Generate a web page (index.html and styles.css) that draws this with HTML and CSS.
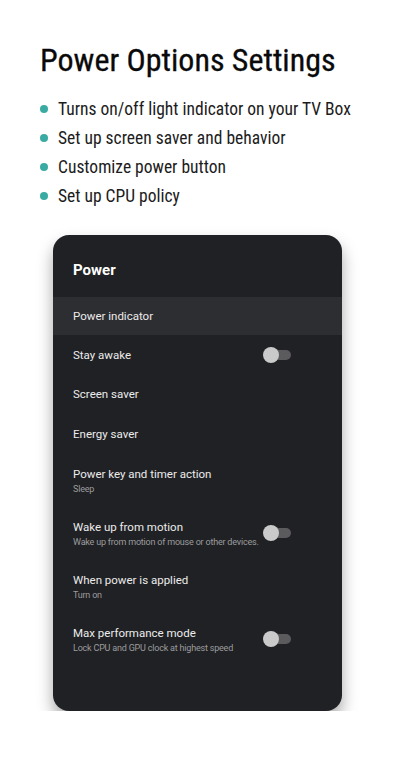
FILE: index.html
```html
<!DOCTYPE html>
<html lang="en">
  <head>
    <meta charset="UTF-8" />
    <meta name="viewport" content="width=device-width, initial-scale=1.0" />
    <title>Power Options Settings</title>
    <link rel="stylesheet" href="styles.css">
  </head>
  <body>
    <header class="intro">
      <h1>Power Options Settings</h1>
      <ul class="features">
        <li>Turns on/off light indicator on your TV Box</li>
        <li>Set up screen saver and behavior</li>
        <li>Customize power button</li>
        <li>Set up CPU policy</li>
      </ul>
    </header>

    <main class="panel">
      <div class="panel-title">Power</div>

      <div class="row selected">
        <div class="label"><span class="name">Power indicator</span></div>
      </div>
      <div class="row">
        <div class="label"><span class="name">Stay awake</span></div>
        <span class="switch"></span>
      </div>
      <div class="row">
        <div class="label"><span class="name">Screen saver</span></div>
      </div>
      <div class="row">
        <div class="label"><span class="name">Energy saver</span></div>
      </div>
      <div class="row tall">
        <div class="label">
          <span class="name">Power key and timer action</span>
          <span class="sub">Sleep</span>
        </div>
      </div>
      <div class="row tall">
        <div class="label">
          <span class="name">Wake up from motion</span>
          <span class="sub">Wake up from motion of mouse or other devices.</span>
        </div>
        <span class="switch"></span>
      </div>
      <div class="row tall">
        <div class="label">
          <span class="name">When power is applied</span>
          <span class="sub">Turn on</span>
        </div>
      </div>
      <div class="row tall">
        <div class="label">
          <span class="name">Max performance mode</span>
          <span class="sub">Lock CPU and GPU clock at highest speed</span>
        </div>
        <span class="switch"></span>
      </div>
    </main>
  </body>
</html>
```

FILE: styles.css
```css
:root {
  --ink: #0a0a0a;
  --teal: #3aaba3;
  --panel: #202124;
  --panel-hi: #2d2e31;
  --text-hi: #ececec;
  --text-lo: #9c9c9e;
  --font: Roboto, "Liberation Sans", Arial, sans-serif;
}

* {
  box-sizing: border-box;
}

html,
body {
  margin: 0;
  background: #fff;
  font-family: var(--font);
}

.intro {
  padding: 40px 0 0 40px;
}

h1 {
  margin: 0;
  font-size: 32px;
  font-weight: 400;
  font-stretch: condensed;
  line-height: 40px;
  color: var(--ink);
  -webkit-text-stroke: 0.3px var(--ink);
}

.features {
  list-style: none;
  margin: 14px 0 0;
  padding: 0;
}

.features li {
  display: flex;
  align-items: center;
  gap: 10px;
  height: 29px;
  font-size: 17.5px;
  font-stretch: condensed;
  color: #1c1c1c;
}

/* teal dot bullets */
.features li::before {
  content: "";
  width: 8px;
  height: 8px;
  border-radius: 50%;
  background: var(--teal);
}

.panel {
  width: 289px;
  height: 476px;
  margin: 25px 0 0 53px;
  background: var(--panel);
  border-radius: 16px;
  overflow: hidden;
  box-shadow: 0 9px 16px rgba(0, 0, 0, 0.35);
}

.panel-title {
  display: flex;
  align-items: center;
  height: 62px;
  padding: 8px 0 0 20px;
  font-size: 15px;
  font-weight: 700;
  color: #fff;
}

.row {
  display: flex;
  align-items: center;
  justify-content: space-between;
  height: 39.5px;
  padding: 0 51px 0 20px;
}

.row.selected {
  height: 38px;
  background: var(--panel-hi);
}

.row.tall {
  height: 53px;
}

.label {
  display: flex;
  flex-direction: column;
  gap: 3px;
}

.name {
  font-size: 11.5px;
  color: var(--text-hi);
}

.sub {
  font-size: 9px;
  letter-spacing: -0.2px;
  color: var(--text-lo);
}

/* off-state toggle */
.switch {
  position: relative;
  flex: none;
  width: 25px;
  height: 10px;
  border-radius: 5px;
  background: #5b5b5e;
}

.switch::after {
  content: "";
  position: absolute;
  left: -3px;
  top: -3px;
  width: 16px;
  height: 16px;
  border-radius: 50%;
  background: #cacaca;
}
```
